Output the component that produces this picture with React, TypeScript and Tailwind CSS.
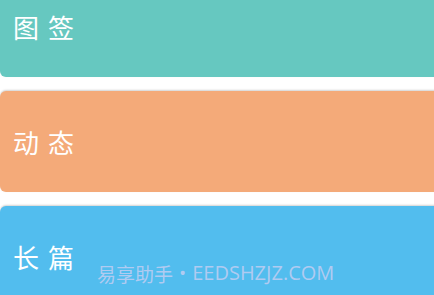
import React from "react";

const cards = [
  { label: "图签", bg: "bg-[#66c8c0]" },
  { label: "动态", bg: "bg-[#f4aa79]" },
  { label: "长篇", bg: "bg-[#52bdee]" },
];

export default function App() {
  return (
    <div
      className="relative w-[434px] h-[295px] overflow-hidden bg-white"
      style={{ fontFamily: '"Noto Sans CJK SC", "Noto Sans", sans-serif' }}
    >
      <div className="flex flex-col gap-[14px] mt-[-24px]">
        {cards.map((c, i) => (
          <div
            key={i}
            className={`${c.bg} h-[101px] w-[460px] rounded-[6px] flex items-center pl-[13px] shadow-[0_-1px_2px_rgba(0,0,0,0.18)]`}
          >
            <span className="text-white text-[26px] leading-none tracking-[9px]">{c.label}</span>
          </div>
        ))}
      </div>
      <div className="absolute left-[97px] top-[263px] flex items-center leading-none text-[#b0cbf1] whitespace-nowrap">
        <span className="text-[19px]">易享助手</span>
        <span className="text-[19px] mx-[6px]" style={{ fontFamily: '"Open Sans", sans-serif' }}>•</span>
        <span className="text-[20px]" style={{ fontFamily: '"Open Sans", sans-serif' }}>EEDSHZJZ.COM</span>
      </div>
    </div>
  );
}
